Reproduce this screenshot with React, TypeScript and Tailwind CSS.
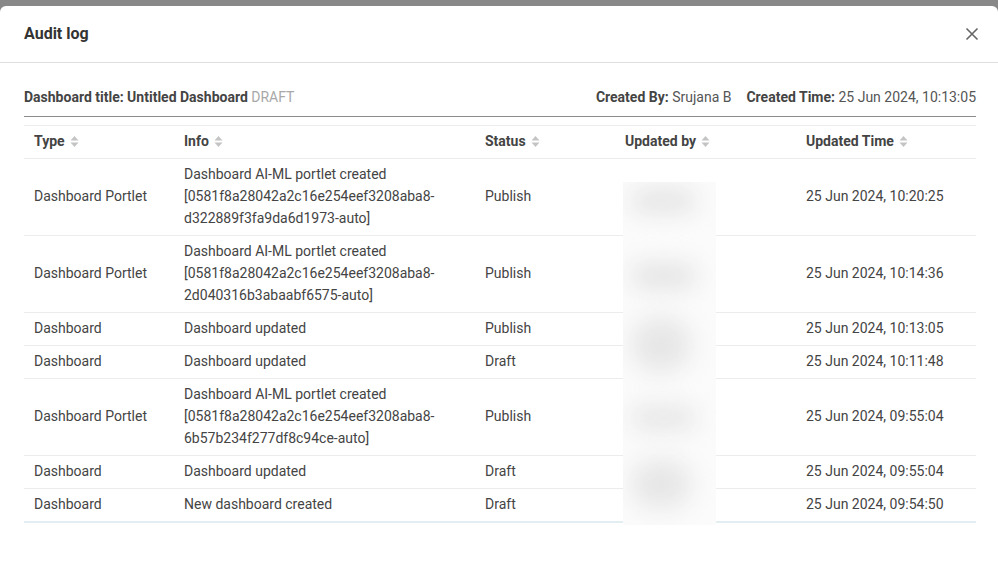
import React from "react";

const rows = [
  { type: "Dashboard Portlet", info: ["Dashboard AI-ML portlet created", "[0581f8a28042a2c16e254eef3208aba8-", "d322889f3fa9da6d1973-auto]"], status: "Publish", time: "25 Jun 2024, 10:20:25" },
  { type: "Dashboard Portlet", info: ["Dashboard AI-ML portlet created", "[0581f8a28042a2c16e254eef3208aba8-", "2d040316b3abaabf6575-auto]"], status: "Publish", time: "25 Jun 2024, 10:14:36" },
  { type: "Dashboard", info: ["Dashboard updated"], status: "Publish", time: "25 Jun 2024, 10:13:05" },
  { type: "Dashboard", info: ["Dashboard updated"], status: "Draft", time: "25 Jun 2024, 10:11:48" },
  { type: "Dashboard Portlet", info: ["Dashboard AI-ML portlet created", "[0581f8a28042a2c16e254eef3208aba8-", "6b57b234f277df8c94ce-auto]"], status: "Publish", time: "25 Jun 2024, 09:55:04" },
  { type: "Dashboard", info: ["Dashboard updated"], status: "Draft", time: "25 Jun 2024, 09:55:04" },
  { type: "Dashboard", info: ["New dashboard created"], status: "Draft", time: "25 Jun 2024, 09:54:50" },
];

function SortIcon() {
  return (
    <svg width="9" height="13" viewBox="0 0 9 13" className="ml-[5px] inline-block">
      <path d="M4.5 1 L8.5 5.5 L0.5 5.5 Z" fill="#c4c4c4" />
      <path d="M4.5 12 L8.5 7.5 L0.5 7.5 Z" fill="#c4c4c4" />
    </svg>
  );
}

const cols = ["w-[150px]", "w-[301px]", "w-[140px]", "w-[181px]", "flex-1"];
const heads = ["Type", "Info", "Status", "Updated by", "Updated Time"];

export default function App() {
  return (
    <div className="w-[998px] h-[573px] bg-[#888888] pt-[6px] overflow-hidden" style={{ fontFamily: "Roboto, 'Liberation Sans', sans-serif" }}>
      <div className="bg-white rounded-md h-[580px] relative">
        <div className="h-[57px] border-b border-[#dedede] flex items-center justify-between pl-[24px] pr-[19px]">
          <div className="text-[16px] font-bold text-[#333]">Audit log</div>
          <svg width="14" height="14" viewBox="0 0 14 14">
            <path d="M1.5 1.5 L12.5 12.5 M12.5 1.5 L1.5 12.5" stroke="#666" strokeWidth="1.6" />
          </svg>
        </div>
        <div className="pl-[24px] pr-[22px]">
          <div className="flex justify-between items-center h-[54px] pt-[16px] border-b border-[#8c8c8c] text-[14px] text-[#444]">
            <div>
              <span className="font-bold">Dashboard title: Untitled Dashboard</span>{" "}
              <span className="text-[#a8a8a8]">DRAFT</span>
            </div>
            <div className="flex gap-[15px]">
              <div>
                <span className="font-bold">Created By:</span> <span className="text-[#555]">Srujana B</span>
              </div>
              <div>
                <span className="font-bold">Created Time:</span> <span className="text-[#555]">25 Jun 2024, 10:13:05</span>
              </div>
            </div>
          </div>
          <div className="mt-[8px] border-t border-[#ececec] text-[14px] text-[#444] relative">
            <div className="flex h-[33px] pb-[2px] items-center border-b border-[#ececec] font-bold text-[#444]">
              {heads.map((h, i) => (
                <div key={h} className={`${cols[i]} pl-[10px] flex items-center`}>
                  {h}
                  <SortIcon />
                </div>
              ))}
            </div>
            {rows.map((r, idx) => (
              <div key={idx} className={`flex items-center pt-[4px] pb-[6px] leading-[22px] ${idx === rows.length - 1 ? "border-b-2 border-[#e3eef3]" : "border-b border-[#ececec]"}`}>
                <div className={`${cols[0]} pl-[10px]`}>{r.type}</div>
                <div className={`${cols[1]} pl-[10px]`}>
                  {r.info.map((l, j) => (
                    <div key={j}>{l}</div>
                  ))}
                </div>
                <div className={`${cols[2]} pl-[10px]`}>{r.status}</div>
                <div className={`${cols[3]} pl-[10px]`}></div>
                <div className={`${cols[4]} pl-[10px]`}>{r.time}</div>
              </div>
            ))}
            <div className="absolute left-[599px] top-[56px] w-[93px] h-[343px] bg-[#fbfbfb] overflow-hidden">
              <div className="absolute left-[8px] top-[8px] w-[65px] h-[22px] rounded-full bg-[#e2e2e2] blur-md" />
              <div className="absolute left-[8px] top-[82px] w-[65px] h-[24px] rounded-full bg-[#e2e2e2] blur-md" />
              <div className="absolute left-[8px] top-[135px] w-[60px] h-[55px] rounded-full bg-[#e6e6e6] blur-md" />
              <div className="absolute left-[8px] top-[225px] w-[65px] h-[22px] rounded-full bg-[#e4e4e4] blur-md" />
              <div className="absolute left-[8px] top-[278px] w-[60px] h-[48px] rounded-full bg-[#e6e6e6] blur-md" />
            </div>
          </div>
        </div>
      </div>
    </div>
  );
}
